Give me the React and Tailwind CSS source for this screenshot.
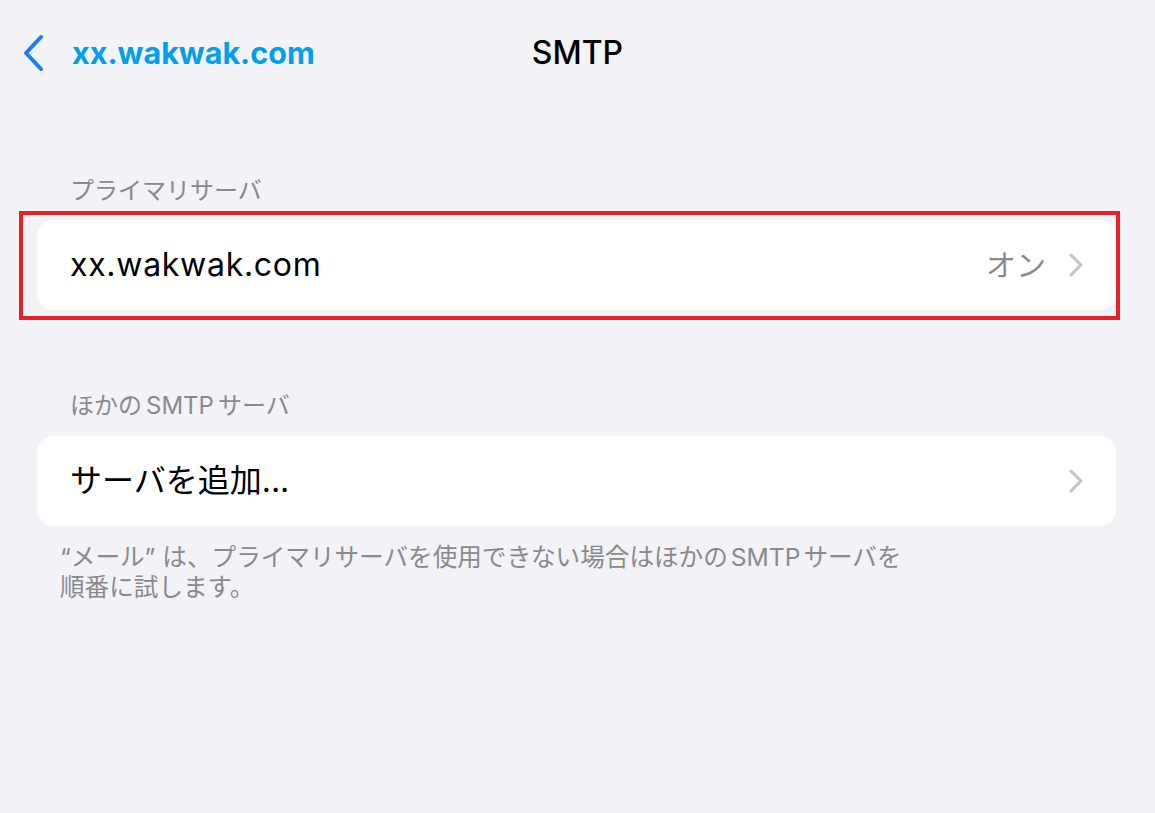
import React from "react";

const Chevron = ({ className }) => (
  <svg viewBox="0 0 16 26" className={className} fill="none">
    <path d="M3 3l10 10L3 23" stroke="currentColor" strokeWidth="3" strokeLinecap="round" strokeLinejoin="round" />
  </svg>
);

const Row = ({ label, value, tracking }) => (
  <div className="flex items-center h-[90px] pl-[33px] pr-[32px] bg-white rounded-[16px]">
    <span className={`flex-1 text-[32px] leading-[40px] text-black ${tracking ? "tracking-[0.7px]" : ""}`}>{label}</span>
    {value && <span className="text-[30px] leading-[40px] text-[#8a8a8e] mr-[22px]">{value}</span>}
    <Chevron className="w-[16px] h-[26px] text-[#c4c4c7]" />
  </div>
);

const App = () => {
  return (
    <div
      className="w-[1155px] h-[813px] bg-[#f2f2f7] overflow-hidden"
      style={{ fontFamily: '"Inter", "Noto Sans CJK JP", sans-serif' }}
    >
      {/* nav bar */}
      <div className="relative flex items-center h-[106px] pl-[22px]">
        <button className="flex items-center gap-[26px] text-[#00a0e9]">
          <svg viewBox="0 0 24 38" className="w-[24px] h-[38px] text-[#1a7cf5]" fill="none">
            <path d="M19 3L4 19l15 16" stroke="currentColor" strokeWidth="4" strokeLinecap="round" strokeLinejoin="round" />
          </svg>
          <span className="text-[30.5px] font-bold">xx.wakwak.com</span>
        </button>
        <div className="absolute inset-x-0 top-0 h-[106px] flex items-center justify-center pointer-events-none">
          <span className="text-[32px] font-medium text-black">SMTP</span>
        </div>
      </div>

      <div className="pl-[37px] pr-[39px]">
        <div className="pl-[33px] pt-[70px] pb-[14px] text-[24px] leading-[30px] text-[#8a8a8e]">プライマリサーバ</div>
        <div className="relative">
          <Row label="xx.wakwak.com" value="オン" tracking />
          <div className="absolute -top-[9px] -left-[18px] -right-[4px] -bottom-[10px] border-4 border-[#e8202a] pointer-events-none" />
        </div>

        <div className="pl-[33px] pt-[81px] pb-[15px] text-[24px] leading-[30px] text-[#8a8a8e]">
          ほかの<span className="mx-[4px]">SMTP</span>サーバ
        </div>
        <Row label="サーバを追加..." />
        <p className="pl-[23px] pt-[16px] text-[24.6px] leading-[30px] text-[#8a8a8e]">
          “メール” は、プライマリサーバを使用できない場合はほかの<span className="mx-[3px]">SMTP</span>サーバを
          <br />
          順番に試します。
        </p>
      </div>
    </div>
  );
};

export default App;
